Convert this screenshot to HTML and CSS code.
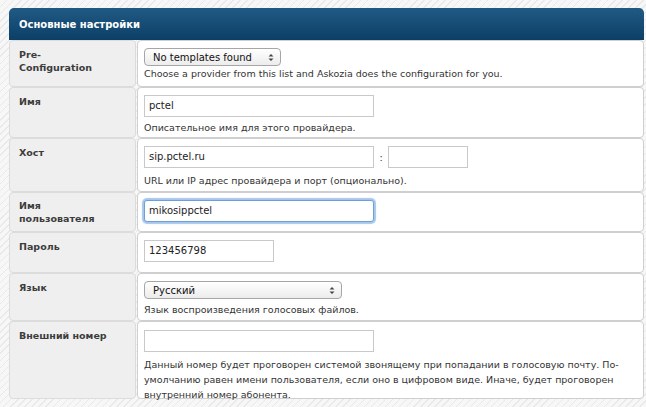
FILE: index.html
```html
<!DOCTYPE html>
<html>
<head>
<meta charset="utf-8">
<link rel="stylesheet" href="styles.css">
</head>
<body>
<div class="panel">
  <div class="head">Основные настройки</div>
  <div class="row r1">
    <div class="lab">Pre-<br>Configuration</div>
    <div class="val">
      <div class="sel sel1"><span>No templates found</span><svg class="arr" width="6" height="9" viewBox="0 0 6 9"><path d="M0.5 3.5 L3 1 L5.5 3.5 Z M0.5 5.5 L3 8 L5.5 5.5 Z" fill="#444"/></svg></div>
      <div class="desc">Choose a provider from this list and Askozia does the configuration for you.</div>
    </div>
  </div>
  <div class="row r2">
    <div class="lab">Имя</div>
    <div class="val">
      <div class="inp w230">pctel</div>
      <div class="desc">Описательное имя для этого провайдера.</div>
    </div>
  </div>
  <div class="row r3">
    <div class="lab">Хост</div>
    <div class="val">
      <div class="line"><div class="inp w230">sip.pctel.ru</div><span class="colon">:</span><div class="inp w80"></div></div>
      <div class="desc">URL или IP адрес провайдера и порт (опционально).</div>
    </div>
  </div>
  <div class="row r4">
    <div class="lab">Имя<br>пользователя</div>
    <div class="val">
      <div class="inp w230 focus">mikosippctel</div>
    </div>
  </div>
  <div class="row r5">
    <div class="lab">Пароль</div>
    <div class="val">
      <div class="inp w130">123456798</div>
    </div>
  </div>
  <div class="row r6">
    <div class="lab">Язык</div>
    <div class="val">
      <div class="sel sel2"><span>Русский</span><svg class="arr" width="6" height="9" viewBox="0 0 6 9"><path d="M0.5 3.5 L3 1 L5.5 3.5 Z M0.5 5.5 L3 8 L5.5 5.5 Z" fill="#444"/></svg></div>
      <div class="desc">Язык воспроизведения голосовых файлов.</div>
    </div>
  </div>
  <div class="row r7">
    <div class="lab">Внешний номер</div>
    <div class="val">
      <div class="inp w230"></div>
      <div class="desc long">Данный номер будет проговорен системой звонящему при попадании в голосовую почту. По-умолчанию равен имени пользователя, если оно в цифровом виде. Иначе, будет проговорен внутренний номер абонента.</div>
    </div>
  </div>
</div>
</body>
</html>
```
FILE: styles.css
```css
html, body {
  margin: 0;
  padding: 0;
}
body {
  width: 646px;
  height: 407px;
  overflow: hidden;
  background-color: #f6f6f6;
  background-image: repeating-linear-gradient(-45deg, #f7f7f7 0px, #f7f7f7 4px, #e9e9e9 4px, #e9e9e9 5px);
  font-family: "DejaVu Sans", Verdana, sans-serif;
  font-size: 9.5px;
  color: #333;
}
.panel {
  margin: 8px 2px 0 9px;
}
.head {
  height: 32px;
  box-sizing: border-box;
  padding: 11px 10px 0 10px;
  border-radius: 5px 5px 0 0;
  background: linear-gradient(#205a84, #0c3f67);
  color: #fff;
  font-weight: bold;
  font-size: 10px;
}
.row {
  display: flex;
  gap: 1px;
}
.lab {
  width: 127px;
  flex: none;
  box-sizing: border-box;
  padding: 7px 9px 0 9px;
  background: #efefef;
  border: 1px solid #dcdcdc;
  border-radius: 4px;
  font-weight: bold;
  color: #3c3c3c;
  line-height: 13px;
}
.r4 .lab { padding-top: 6px; }
.val {
  flex: 1;
  box-sizing: border-box;
  padding: 7px 0 0 6px;
  background: #fff;
  border: 1px solid #cfcfcf;
  border-radius: 4px;
}
.r1 { height: 47px; }
.r2 { height: 51px; }
.r3 { height: 54px; }
.r4 { height: 40px; }
.r5 { height: 41px; }
.r6 { height: 48px; }
.r7 { height: 78px; }
.desc {
  line-height: 15px;
  margin-top: 2px;
  padding-right: 20px;
}
.r1 .desc { margin-top: 0; }
.r2 .desc { margin-top: 3px; }
.r3 .desc { margin-top: 5px; }
.r6 .desc { margin-top: 3px; }
.r7 .val { padding-top: 8px; }
.r7 .desc { margin-top: 5px; }
.inp {
  box-sizing: border-box;
  height: 22px;
  border: 1px solid #c9c9c9;
  background: #fff;
  padding: 0 4px;
  line-height: 20px;
  font-size: 10px;
  color: #222;
}
.w230 { width: 230px; }
.w130 { width: 130px; }
.w80 { width: 80px; }
.focus {
  border: 1px solid #6e9fd6;
  box-shadow: 0 0 1px 2px #a7c6ec;
  border-radius: 3px;
}
.line {
  display: flex;
  align-items: center;
}
.colon {
  width: 14px;
  text-align: center;
}
.sel {
  box-sizing: border-box;
  height: 18px;
  border: 1px solid #a6a6a6;
  border-radius: 4px;
  background: linear-gradient(#ffffff, #ececec);
  display: flex;
  align-items: center;
  justify-content: space-between;
  padding: 0 6px 0 8px;
  font-size: 10px;
  color: #111;
}
.sel1 { width: 137px; }
.sel2 { width: 198px; }
```
